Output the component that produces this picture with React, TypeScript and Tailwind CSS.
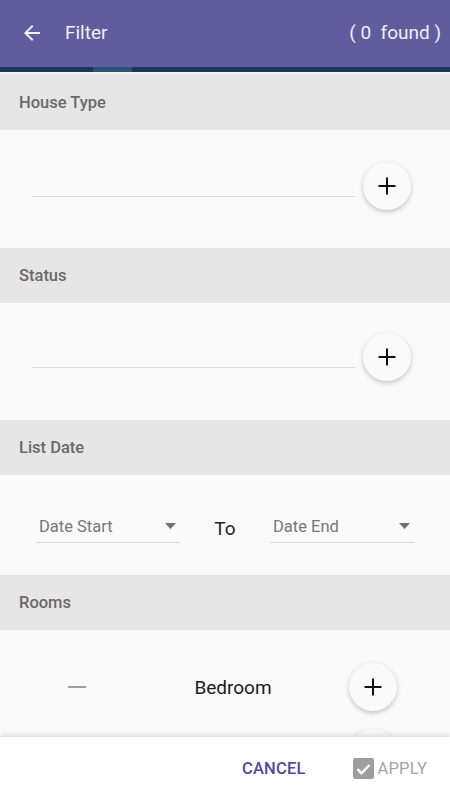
import React from "react";

const font = { fontFamily: "Roboto, 'Noto Sans', sans-serif" };

function PlusButton() {
  return (
    <button className="flex h-[48px] w-[48px] shrink-0 items-center justify-center rounded-full bg-[#fafafa] shadow-[0_2px_5px_rgba(0,0,0,0.22)]">
      <svg width="20" height="20" viewBox="0 0 20 20">
        <path d="M10 1.5v17M1.5 10h17" stroke="#111" strokeWidth="2" />
      </svg>
    </button>
  );
}

function SectionHeader({ title, h }: { title: string; h: string }) {
  return (
    <div className={`flex ${h} items-center bg-[#e6e6e6] px-[19px] pt-[2px]`}>
      <span className="text-[16.5px] font-medium text-[#6a6a6a]">{title}</span>
    </div>
  );
}

function ChipInput({ pt }: { pt: string }) {
  return (
    <div className={`flex items-start bg-[#fafafa] pl-[32px] pr-[39px] ${pt}`}>
      <div className="mt-[34px] h-px flex-1 bg-[#dcdcdc]" />
      <div className="ml-[8px]">
        <PlusButton />
      </div>
    </div>
  );
}

function DateField({ label }: { label: string }) {
  return (
    <div className="flex h-[30px] w-[144px] items-center justify-between border-b border-[#d6d6d6] pl-[3px] pr-[4px]">
      <span className="text-[16.5px] text-[#777]">{label}</span>
      <svg width="11" height="6" viewBox="0 0 11 6" className="mb-[3px]">
        <path d="M0 0h11L5.5 6z" fill="#707070" />
      </svg>
    </div>
  );
}

// label is optional: the second row sits under the footer, only its button peeks out
function RoomRow({ label }: { label?: string }) {
  return (
    <div className="flex h-[66px] items-center">
      <div className="flex w-[154px] justify-center">
        <div className="h-[2px] w-[18px] bg-[#9e9e9e]" />
      </div>
      <div className="w-[158px] pt-[2px] text-center text-[19px] text-[#1a1a1a]">{label}</div>
      <div className="ml-[37px]">
        <PlusButton />
      </div>
    </div>
  );
}

export default function App() {
  return (
    <div className="flex h-[800px] w-[450px] flex-col overflow-hidden bg-[#fafafa]" style={font}>
      <header className="flex h-[67px] shrink-0 items-center bg-[#605c9e] pl-[20px] pr-[9px] text-[#f1f0f7]">
        <svg width="24" height="24" viewBox="0 0 24 24" className="mt-[-2px]">
          <path d="M20 11H7.83l5.59-5.59L12 4l-8 8 8 8 1.41-1.41L7.83 13H20v-2z" fill="#f1f0f7" />
        </svg>
        <span className="ml-[21px] text-[19px]">Filter</span>
        <span className="ml-auto whitespace-pre text-[19px]">( 0  found )</span>
      </header>
      <div className="flex h-[5px] shrink-0 bg-[#1b3658]">
        <div className="w-[93px]" />
        <div className="w-[39px] bg-[#2b5478]" />
      </div>
      <div className="h-[2px] shrink-0 bg-[#f4f4f4]" />

      <main className="flex-1 overflow-hidden">
        <SectionHeader title="House Type" h="h-[56px]" />
        <div className="h-[118px]">
          <ChipInput pt="pt-[32px]" />
        </div>

        <SectionHeader title="Status" h="h-[55px]" />
        <div className="h-[117px]">
          <ChipInput pt="pt-[30px]" />
        </div>

        <SectionHeader title="List Date" h="h-[55px]" />
        <div className="flex h-[100px] items-center px-[36px] pt-[5px]">
          <DateField label="Date Start" />
          <div className="flex-1 pt-[4px] text-center text-[19px] text-[#222]">To</div>
          <DateField label="Date End" />
        </div>

        <SectionHeader title="Rooms" h="h-[55px]" />
        <div className="pt-[24px]">
          <RoomRow label="Bedroom" />
          <RoomRow />
        </div>
      </main>

      <footer className="relative z-10 flex h-[63px] shrink-0 items-center bg-white pr-[23px] shadow-[0_-2px_6px_rgba(0,0,0,0.14)]">
        <button className="ml-auto text-[16.5px] font-medium leading-[24px] tracking-[0.2px] text-[#4f4a9c]">
          CANCEL
        </button>
        <div className="ml-[47px] flex items-center">
          <span className="flex h-[21px] w-[21px] items-center justify-center rounded-[2px] bg-[#9e9e9e]">
            <svg width="15" height="12" viewBox="0 0 15 12">
              <path d="M1.5 6.2l4 4L13.5 2" stroke="#fff" strokeWidth="2.4" fill="none" />
            </svg>
          </span>
          <span className="ml-[4px] text-[16.5px] leading-[24px] tracking-[0.2px] text-[#a3a3a3]">APPLY</span>
        </div>
      </footer>
    </div>
  );
}
